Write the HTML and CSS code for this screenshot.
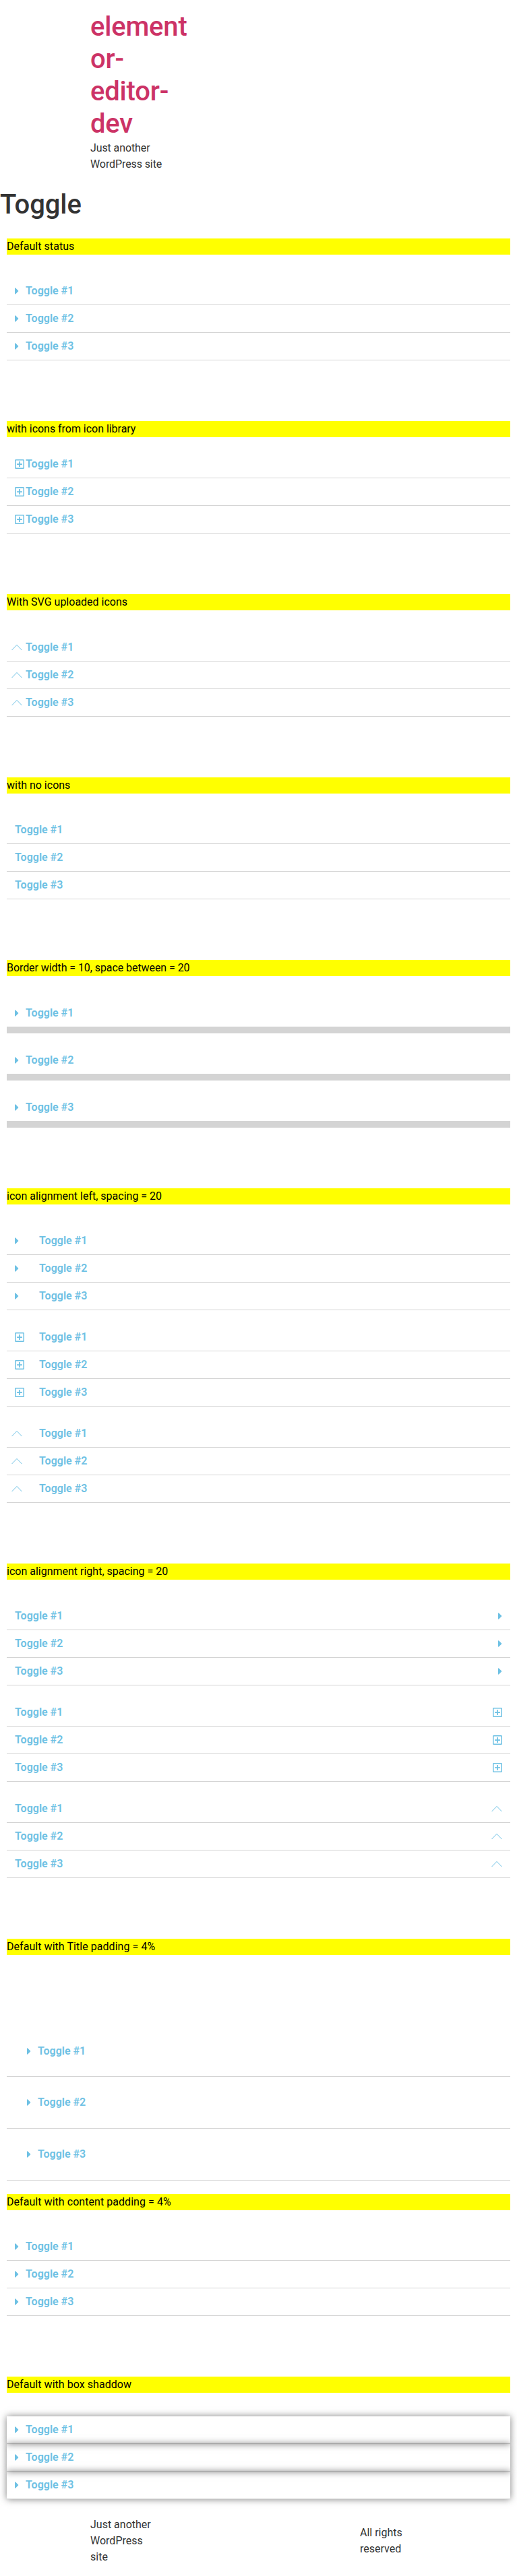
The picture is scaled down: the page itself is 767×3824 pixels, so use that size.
FILE: index.html
```html
<!DOCTYPE html>
<html lang="en">
<head>
<meta charset="utf-8">
<title>Toggle</title>
<link rel="stylesheet" href="styles.css">
</head>
<body>
<svg class="sprite" aria-hidden="true">
  <symbol id="caret" viewBox="0 0 192 512"><path d="M0 384.662V127.338c0-17.818 21.543-26.741 34.142-14.142l128.662 128.662c7.81 7.81 7.81 20.474 0 28.284L34.142 398.804C21.543 411.404 0 402.48 0 384.662z"/></symbol>
  <symbol id="plus" viewBox="0 0 448 512"><path d="M352 240v32c0 6.6-5.4 12-12 12h-88v88c0 6.6-5.4 12-12 12h-32c-6.6 0-12-5.4-12-12v-88h-88c-6.6 0-12-5.4-12-12v-32c0-6.6 5.4-12 12-12h88v-88c0-6.6 5.4-12 12-12h32c6.6 0 12 5.4 12 12v88h88c6.6 0 12 5.4 12 12zm96-160v352c0 26.5-21.5 48-48 48H48c-26.5 0-48-21.5-48-48V80c0-26.5 21.5-48 48-48h352c26.5 0 48 21.5 48 48zm-48 346V86c0-3.3-2.7-6-6-6H54c-3.3 0-6 2.7-6 6v340c0 3.3 2.7 6 6 6h340c3.3 0 6-2.7 6-6z"/></symbol>
  <symbol id="chevron" viewBox="0 0 16 16"><path d="M.8 11.8 8 4.4l7.2 7.4" fill="none" stroke="currentColor" stroke-width="1" stroke-linecap="round"/></symbol>
</svg>

<header class="site-header">
  <h1 class="site-title"><a href="#">element<br>or-<br>editor-<br>dev</a></h1>
  <p class="site-description">Just another<br>WordPress site</p>
</header>

<main>
  <h1 class="page-title">Toggle</h1>

  <section class="section">
    <p class="label wide">Default status</p>
    <div class="toggle">
      <div class="item"><span class="icon"><svg class="caret"><use href="#caret"/></svg></span><a>Toggle #1</a></div>
      <div class="item"><span class="icon"><svg class="caret"><use href="#caret"/></svg></span><a>Toggle #2</a></div>
      <div class="item"><span class="icon"><svg class="caret"><use href="#caret"/></svg></span><a>Toggle #3</a></div>
    </div>
  </section>

  <section class="section close">
    <p class="label snug">with icons from icon library</p>
    <div class="toggle">
      <div class="item"><span class="icon"><svg class="plus"><use href="#plus"/></svg></span><a>Toggle #1</a></div>
      <div class="item"><span class="icon"><svg class="plus"><use href="#plus"/></svg></span><a>Toggle #2</a></div>
      <div class="item"><span class="icon"><svg class="plus"><use href="#plus"/></svg></span><a>Toggle #3</a></div>
    </div>
  </section>

  <section class="section loose">
    <p class="label">With SVG uploaded icons</p>
    <div class="toggle">
      <div class="item"><span class="icon"><svg class="chevron"><use href="#chevron"/></svg></span><a>Toggle #1</a></div>
      <div class="item"><span class="icon"><svg class="chevron"><use href="#chevron"/></svg></span><a>Toggle #2</a></div>
      <div class="item"><span class="icon"><svg class="chevron"><use href="#chevron"/></svg></span><a>Toggle #3</a></div>
    </div>
  </section>

  <section class="section">
    <p class="label">with no icons</p>
    <div class="toggle">
      <div class="item"><a>Toggle #1</a></div>
      <div class="item"><a>Toggle #2</a></div>
      <div class="item"><a>Toggle #3</a></div>
    </div>
  </section>

  <section class="section loose">
    <p class="label tight">Border width = 10, space between = 20</p>
    <div class="toggle thick">
      <div class="item"><span class="icon"><svg class="caret"><use href="#caret"/></svg></span><a>Toggle #1</a></div>
      <div class="item"><span class="icon"><svg class="caret"><use href="#caret"/></svg></span><a>Toggle #2</a></div>
      <div class="item"><span class="icon"><svg class="caret"><use href="#caret"/></svg></span><a>Toggle #3</a></div>
    </div>
  </section>

  <section class="section">
    <p class="label">icon alignment left, spacing = 20</p>
    <div class="toggle spaced">
      <div class="item"><span class="icon"><svg class="caret"><use href="#caret"/></svg></span><a>Toggle #1</a></div>
      <div class="item"><span class="icon"><svg class="caret"><use href="#caret"/></svg></span><a>Toggle #2</a></div>
      <div class="item"><span class="icon"><svg class="caret"><use href="#caret"/></svg></span><a>Toggle #3</a></div>
    </div>
    <div class="toggle spaced">
      <div class="item"><span class="icon"><svg class="plus"><use href="#plus"/></svg></span><a>Toggle #1</a></div>
      <div class="item"><span class="icon"><svg class="plus"><use href="#plus"/></svg></span><a>Toggle #2</a></div>
      <div class="item"><span class="icon"><svg class="plus"><use href="#plus"/></svg></span><a>Toggle #3</a></div>
    </div>
    <div class="toggle spaced">
      <div class="item"><span class="icon"><svg class="chevron"><use href="#chevron"/></svg></span><a>Toggle #1</a></div>
      <div class="item"><span class="icon"><svg class="chevron"><use href="#chevron"/></svg></span><a>Toggle #2</a></div>
      <div class="item"><span class="icon"><svg class="chevron"><use href="#chevron"/></svg></span><a>Toggle #3</a></div>
    </div>
  </section>

  <section class="section">
    <p class="label">icon alignment right, spacing = 20</p>
    <div class="toggle right">
      <div class="item"><span class="icon"><svg class="caret"><use href="#caret"/></svg></span><a>Toggle #1</a></div>
      <div class="item"><span class="icon"><svg class="caret"><use href="#caret"/></svg></span><a>Toggle #2</a></div>
      <div class="item"><span class="icon"><svg class="caret"><use href="#caret"/></svg></span><a>Toggle #3</a></div>
    </div>
    <div class="toggle right">
      <div class="item"><span class="icon"><svg class="plus"><use href="#plus"/></svg></span><a>Toggle #1</a></div>
      <div class="item"><span class="icon"><svg class="plus"><use href="#plus"/></svg></span><a>Toggle #2</a></div>
      <div class="item"><span class="icon"><svg class="plus"><use href="#plus"/></svg></span><a>Toggle #3</a></div>
    </div>
    <div class="toggle right">
      <div class="item"><span class="icon"><svg class="chevron"><use href="#chevron"/></svg></span><a>Toggle #1</a></div>
      <div class="item"><span class="icon"><svg class="chevron"><use href="#chevron"/></svg></span><a>Toggle #2</a></div>
      <div class="item"><span class="icon"><svg class="chevron"><use href="#chevron"/></svg></span><a>Toggle #3</a></div>
    </div>
  </section>

  <section class="section padded">
    <p class="label wide">Default with Title padding = 4%</p>
    <div class="toggle">
      <div class="item"><span class="icon"><svg class="caret"><use href="#caret"/></svg></span><a>Toggle #1</a></div>
      <div class="item"><span class="icon"><svg class="caret"><use href="#caret"/></svg></span><a>Toggle #2</a></div>
      <div class="item"><span class="icon"><svg class="caret"><use href="#caret"/></svg></span><a>Toggle #3</a></div>
    </div>
  </section>

  <section class="section">
    <p class="label wide">Default with content padding = 4%</p>
    <div class="toggle">
      <div class="item"><span class="icon"><svg class="caret"><use href="#caret"/></svg></span><a>Toggle #1</a></div>
      <div class="item"><span class="icon"><svg class="caret"><use href="#caret"/></svg></span><a>Toggle #2</a></div>
      <div class="item"><span class="icon"><svg class="caret"><use href="#caret"/></svg></span><a>Toggle #3</a></div>
    </div>
  </section>

  <section class="section loose last">
    <p class="label wide">Default with box shaddow</p>
    <div class="toggle shadow">
      <div class="item"><span class="icon"><svg class="caret"><use href="#caret"/></svg></span><a>Toggle #1</a></div>
      <div class="item"><span class="icon"><svg class="caret"><use href="#caret"/></svg></span><a>Toggle #2</a></div>
      <div class="item"><span class="icon"><svg class="caret"><use href="#caret"/></svg></span><a>Toggle #3</a></div>
    </div>
  </section>
</main>

<footer class="site-footer">
  <p>Just another<br>WordPress<br>site</p>
  <p>All rights<br>reserved</p>
</footer>
</body>
</html>
```
FILE: styles.css
```css
* { box-sizing: border-box; }

body {
  margin: 0;
  background: #fff;
  color: #333;
  font: 400 16px/24px Roboto, sans-serif;
}

h1, p { margin: 0; }

.sprite { display: none; }

.site-header { padding: 16px 134px; }

.site-title, .page-title {
  font-size: 40px;
  font-weight: 500;
  line-height: 48px;
}

.site-title { letter-spacing: -.2px; }
.site-title a { color: #c36; text-decoration: none; }
.site-description { letter-spacing: -.1px; }

.page-title { margin: 8px 0 26px; letter-spacing: -.1px; }

.section { padding: 0 10px; margin-bottom: 90px; }

.label {
  background: #ff0;
  color: #000;
  margin-bottom: 34px;
}

.label.wide { letter-spacing: .05px; }
.label.snug { letter-spacing: -.03px; }
.label.tight { letter-spacing: -.07px; }

.close .label { margin-bottom: 20px; }
.loose .label { margin-bottom: 35px; }
.padded .label { margin-bottom: 104.7px; }
.section.padded { margin-bottom: 20px; }
.section.last { margin-bottom: 0; }

.toggle + .toggle { margin-top: 20px; }

.item {
  display: flex;
  align-items: center;
  padding: 12px;
  border-bottom: 1px solid #d4d4d4;
  color: #6ec1e4;
  font-weight: 600;
  line-height: 16px;
}

.icon { display: flex; width: 16px; height: 16px; }
.icon svg { flex: none; height: 16px; fill: currentColor; }
.caret { width: 6px; }
.plus { width: 14px; }
.chevron { width: 16px; margin-left: -5px; }

.thick .item { border-bottom-width: 10px; }
.thick .item + .item { margin-top: 20px; }

.spaced .icon { margin-right: 20px; }

.right .item { flex-direction: row-reverse; justify-content: space-between; }
.right .icon { justify-content: flex-end; }
.right .chevron { margin-left: 0; }

.padded .item { padding: 4%; }

.shadow .item { box-shadow: 0 0 10px 0 rgba(0, 0, 0, .5); }

.site-footer {
  display: flex;
  align-items: center;
  padding: 26px 134px 16px;
}

.site-footer p { width: 400px; }
.site-footer p + p { width: 99px; flex: none; }
```
